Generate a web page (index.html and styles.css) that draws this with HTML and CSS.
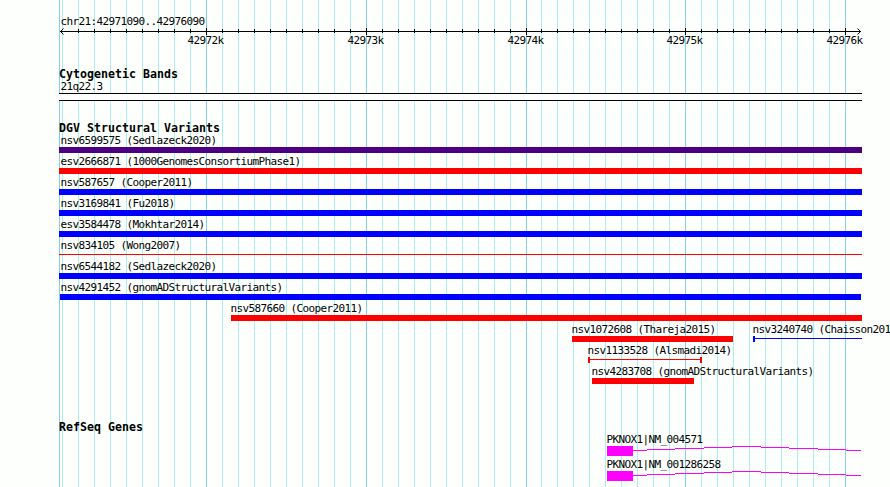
FILE: index.html
```
<!DOCTYPE html>
<html lang="en">
<head>
    <meta charset="UTF-8">
    <meta name="viewport" content="width=device-width, initial-scale=1.0">
    <title>chr21:42971090..42976090</title>
    <link rel="stylesheet" href="styles.css">
</head>
<body>
    <main class="panel">
        <header class="ruler">
            <div class="label">chr21:42971090..42976090</div>
            <svg class="axis" width="803" height="7" viewBox="0 0 803 7">
                <path d="M1 3.5H802M1.5 3.5L4.5 .5M1.5 3.5L4.5 6.5M801.5 3.5L798.5 .5M801.5 3.5L798.5 6.5"/>
            </svg>
            <div class="scale">
                <span>42972k</span>
                <span>42973k</span>
                <span>42974k</span>
                <span class="short">42975k</span>
                <span>42976k</span>
            </div>
        </header>

        <section class="track bands">
            <h2>Cytogenetic Bands</h2>
            <div class="label">21q22.3</div>
            <div class="band"></div>
        </section>

        <section class="track variants">
            <h2>DGV Structural Variants</h2>
            <div class="row">
                <div class="label">nsv6599575 (Sedlazeck2020)</div>
                <div class="bar complex"></div>
            </div>
            <div class="row">
                <div class="label">esv2666871 (1000GenomesConsortiumPhase1)</div>
                <div class="bar loss"></div>
            </div>
            <div class="row">
                <div class="label">nsv587657 (Cooper2011)</div>
                <div class="bar gain"></div>
            </div>
            <div class="row">
                <div class="label">nsv3169841 (Fu2018)</div>
                <div class="bar gain"></div>
            </div>
            <div class="row">
                <div class="label">esv3584478 (Mokhtar2014)</div>
                <div class="bar gain"></div>
            </div>
            <div class="row">
                <div class="label">nsv834105 (Wong2007)</div>
                <div class="span loss"></div>
            </div>
            <div class="row">
                <div class="label">nsv6544182 (Sedlazeck2020)</div>
                <div class="bar gain"></div>
            </div>
            <div class="row">
                <div class="label">nsv4291452 (gnomADStructuralVariants)</div>
                <div class="bar gain inset"></div>
            </div>
            <div class="row">
                <div class="feature cooper">
                    <div class="label">nsv587660 (Cooper2011)</div>
                    <div class="bar loss"></div>
                </div>
            </div>
            <div class="row">
                <div class="feature thareja">
                    <div class="label">nsv1072608 (Thareja2015)</div>
                    <div class="bar loss"></div>
                </div>
                <div class="feature chaisson">
                    <div class="label">nsv3240740 (Chaisson201</div>
                    <div class="span gain cap-start"></div>
                </div>
            </div>
            <div class="row">
                <div class="feature alsmadi">
                    <div class="label">nsv1133528 (Alsmadi2014)</div>
                    <div class="span loss cap-start cap-end"></div>
                </div>
            </div>
            <div class="row">
                <div class="feature gnomad">
                    <div class="label">nsv4283708 (gnomADStructuralVariants)</div>
                    <div class="bar loss"></div>
                </div>
            </div>
        </section>

        <section class="track genes">
            <h2>RefSeq Genes</h2>
            <div class="gene">
                <div class="label">PKNOX1|NM_004571</div>
                <svg width="255" height="10" viewBox="0 0 255 10">
                    <rect width="26" height="10"/>
                    <path d="M26 4.5H40M40 3.5H68M68 2.5H97M97 1.5H125M125 .5H154M154 1.5H182M182 2.5H211M211 3.5H239M239 4.5H254"/>
                </svg>
            </div>
            <div class="gene">
                <div class="label">PKNOX1|NM_001286258</div>
                <svg width="255" height="10" viewBox="0 0 255 10">
                    <rect width="26" height="10"/>
                    <path d="M26 4.5H40M40 3.5H68M68 2.5H97M97 1.5H125M125 .5H154M154 1.5H182M182 2.5H211M211 3.5H239M239 4.5H254"/>
                </svg>
            </div>
        </section>
    </main>
</body>
</html>
```
FILE: styles.css
```
* {
    box-sizing: border-box;
}
body {
    margin: 0;
    height: 487px;
    overflow: hidden;
    background: #fdfffc;
    color: #000;
    font-family: 'DejaVu Sans Mono', monospace;
    font-size: 11px;
    line-height: 13px;
}
/* 100bp lines every 16px, 1kb lines darker */
.panel {
    width: 803px;
    height: 487px;
    margin-left: 59px;
    padding-top: 15px;
    background:
        linear-gradient(#87ceeb, #87ceeb) 0 0 / 1px 100% no-repeat,
        linear-gradient(#87ceeb, #87ceeb) 147px 0 / 1px 100% no-repeat,
        linear-gradient(#87ceeb, #87ceeb) 307px 0 / 1px 100% no-repeat,
        linear-gradient(#87ceeb, #87ceeb) 467px 0 / 1px 100% no-repeat,
        linear-gradient(#87ceeb, #87ceeb) 626px 0 / 1px 100% no-repeat,
        linear-gradient(#87ceeb, #87ceeb) 786px 0 / 1px 100% no-repeat,
        repeating-linear-gradient(to right, #afeeee 0 1px, transparent 1px 16px) 3px 0 / 465px 100% no-repeat,
        repeating-linear-gradient(to right, #afeeee 0 1px, transparent 1px 16px) 482px 0 / 305px 100% no-repeat;
}
.label {
    height: 13px;
    padding-left: 1.5px;
    letter-spacing: -0.62px;
    white-space: nowrap;
}
h2 {
    margin: 0;
    height: 13px;
    font-size: 11.6px;
    line-height: 13px;
    letter-spacing: 0.02px;
}

/* Ruler */
.ruler {
    height: 53px;
}
.axis {
    display: block;
    fill: none;
    stroke: #000;
    background:
        linear-gradient(#000, #000) 147px 0 / 1px 7px no-repeat,
        linear-gradient(#000, #000) 307px 0 / 1px 7px no-repeat,
        linear-gradient(#000, #000) 467px 0 / 1px 7px no-repeat,
        linear-gradient(#000, #000) 626px 0 / 1px 7px no-repeat,
        linear-gradient(#000, #000) 786px 0 / 1px 7px no-repeat,
        repeating-linear-gradient(to right, #000 0 1px, transparent 1px 16px) 19px 1px / 449px 4px no-repeat,
        repeating-linear-gradient(to right, #000 0 1px, transparent 1px 16px) 482px 1px / 305px 4px no-repeat;
}
.scale {
    display: flex;
    gap: 124px;
    margin-top: -1px;
    padding-left: 128.5px;
    letter-spacing: -0.62px;
}
.scale span {
    flex: none;
    width: 36px;
}
.scale .short {
    margin-left: -1px;
}

/* Tracks */
.bands {
    height: 54px;
}
.bands .label {
    height: 12px;
    line-height: 11px;
}
.band {
    height: 8px;
    border-top: 1px solid #000;
    border-bottom: 1px solid #000;
    background: #fff;
}
.variants {
    height: 299px;
}
.variants h2 {
    height: 12px;
}
.row {
    height: 21px;
}
.bar {
    height: 6px;
    background: currentColor;
}
.bar.inset {
    margin: 0 1px;
}
.span {
    height: 6px;
    background: linear-gradient(currentColor, currentColor) 0 2px / 100% 1px no-repeat;
}
.complex {
    color: #4b0082;
}
.loss {
    color: #f00;
}
.gain {
    color: #00f;
}
.cap-start {
    border-left: 2px solid;
}
.cap-end {
    border-right: 2px solid;
}

/* Features that start inside the region */
.row:has(.feature) {
    display: flex;
}
.feature .label,
.gene .label {
    padding-left: 0;
    margin-left: -0.5px;
}
.feature {
    flex: none;
}
.cooper {
    width: 631px;
    margin-left: 172px;
}
.thareja {
    width: 161px;
    margin-left: 513px;
}
.chaisson {
    width: 109px;
    margin-left: 20px;
}
.alsmadi {
    width: 114px;
    margin-left: 529px;
}
.gnomad {
    width: 102px;
    margin-left: 533px;
}

/* Genes */
.gene {
    height: 25px;
    margin-left: 548px;
}
.gene svg {
    display: block;
    fill: #f0f;
}
.gene path {
    fill: none;
    stroke: #f0f;
}
.genes h2 {
    height: 12px;
}
```
